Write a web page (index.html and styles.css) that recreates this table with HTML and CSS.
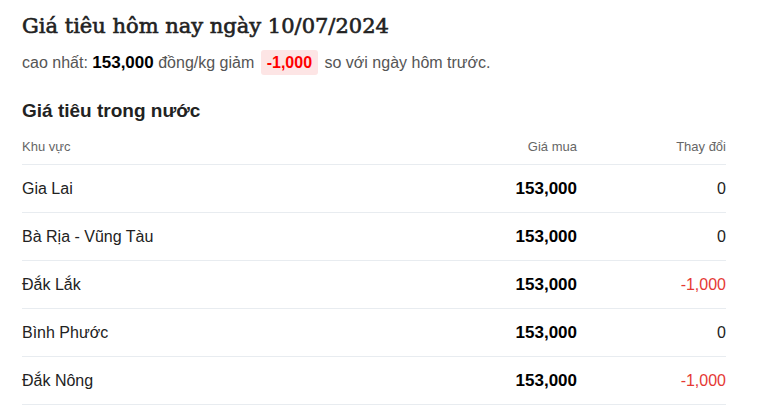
FILE: index.html
```html
<!DOCTYPE html>
<html lang="vi">
<head>
<meta charset="utf-8">
<title>Giá tiêu hôm nay</title>
<link rel="stylesheet" href="styles.css">
</head>
<body>
<main class="page">
  <h1 class="title">Giá tiêu hôm nay ngày 10/07/2024</h1>
  <p class="summary">cao nhất: <strong class="price">153,000</strong> đồng/kg giảm <span class="badge">-1,000</span> so với ngày hôm trước.</p>
  <h2 class="section">Giá tiêu trong nước</h2>
  <table class="prices">
    <thead>
      <tr><th class="c-area">Khu vực</th><th class="c-num">Giá mua</th><th class="c-chg">Thay đổi</th></tr>
    </thead>
    <tbody>
      <tr><td class="c-area">Gia Lai</td><td class="c-num">153,000</td><td class="c-chg">0</td></tr>
      <tr><td class="c-area">Bà Rịa - Vũng Tàu</td><td class="c-num">153,000</td><td class="c-chg">0</td></tr>
      <tr><td class="c-area">Đắk Lắk</td><td class="c-num">153,000</td><td class="c-chg down">-1,000</td></tr>
      <tr><td class="c-area">Bình Phước</td><td class="c-num">153,000</td><td class="c-chg">0</td></tr>
      <tr><td class="c-area">Đắk Nông</td><td class="c-num">153,000</td><td class="c-chg down">-1,000</td></tr>
    </tbody>
  </table>
</main>
</body>
</html>
```
FILE: styles.css
```css
html, body {
  margin: 0;
  padding: 0;
  background: #fff;
}
body {
  font-family: "Liberation Sans", Arial, sans-serif;
  color: #222;
}
.page {
  width: 704px;
  padding: 9px 0 0 22px;
}
.title {
  font-family: "DejaVu Serif", serif;
  font-weight: normal;
  font-size: 21px;
  line-height: 34px;
  margin: 0;
  color: #222;
  -webkit-text-stroke: 0.6px #222;
}
.summary {
  margin: 7px 0 0;
  font-size: 16px;
  line-height: 26px;
  color: #555;
}
.price {
  color: #000;
  font-weight: bold;
  font-size: 17px;
}
.badge {
  display: inline-block;
  background: #fde5e5;
  color: #f00;
  font-weight: bold;
  padding: 0 6px;
  margin: 0 2px;
  border-radius: 3px;
  line-height: 25px;
}
.section {
  margin: 23px 0 0;
  font-size: 19px;
  line-height: 24px;
  font-weight: bold;
  color: #222;
}
.prices {
  width: 100%;
  border-collapse: collapse;
  margin-top: 7px;
}
.prices th {
  font-weight: normal;
  font-size: 13px;
  color: #666;
  height: 32px;
  padding: 0 0 2px;
  border-bottom: 1px solid #e8ecf0;
}
.prices td {
  font-size: 16px;
  height: 47px;
  padding: 0;
  border-bottom: 1px solid #e8ecf0;
  color: #222;
}
.c-area { text-align: left; }
.c-num { text-align: right; width: 200px; }
.prices td.c-num { font-weight: bold; color: #000; font-size: 17px; }
.c-chg { text-align: right; width: 149px; }
.prices td.down { color: #e53935; }
```
